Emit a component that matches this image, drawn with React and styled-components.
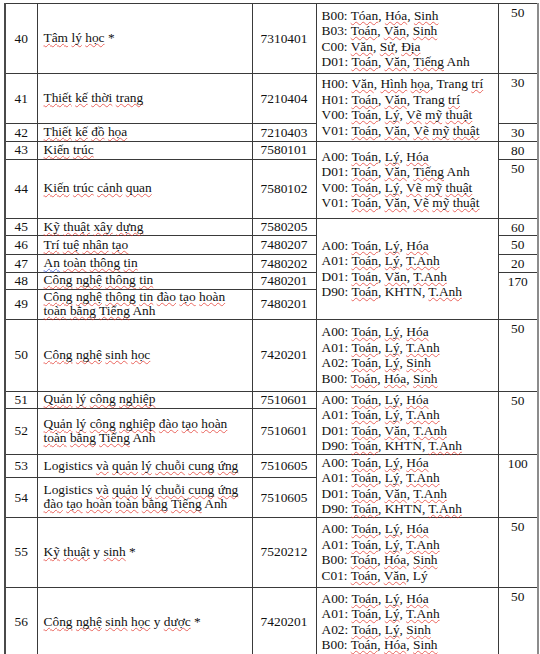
import { Fragment } from 'react';
import styled, { createGlobalStyle } from 'styled-components';

const Global = createGlobalStyle`
  html, body {
    margin: 0;
    padding: 0;
    background: #ffffff;
  }
  body {
    font-family: "Liberation Serif", "Times New Roman", serif;
    color: #111;
  }
`;

const Page = styled.div`
  width: 540px;
  height: 654px;
  padding: 3px 0 0 4px;
  box-sizing: border-box;
  overflow: hidden;
`;

const Sheet = styled.table`
  width: 533px;
  table-layout: fixed;
  border-collapse: collapse;
  font-size: 13.4px;
  line-height: 15.5px;
  border-top: 1px solid #3a3a3a;
  border-left: 2px solid #4a4a4a;
  border-right: 2px solid #8c8c8c;
  border-bottom: 2px solid #7a7a7a;
`;

const Row = styled.tr`
  height: ${(p) => p.$h}px;
`;

const Cell = styled.td`
  border: 1px solid #3a3a3a;
  padding: 0;
  vertical-align: middle;
  white-space: nowrap;
`;

const NoCell = styled(Cell)`
  text-align: center;
`;

const NameCell = styled(Cell)`
  padding: 0 8px 0 6px;
  line-height: 14.5px;
  white-space: normal;
`;

const CodeCell = styled(Cell)`
  text-align: center;
`;

const ComboCell = styled(Cell)`
  padding: 0 4px 0 5px;
`;

const QuotaCell = styled(Cell)`
  text-align: center;
  vertical-align: top;
  padding-top: 1px;
`;

const Flag = styled.span`
  text-decoration: underline wavy ${(p) => (p.$tone === 'blue' ? 'rgba(60, 90, 215, 0.8)' : 'rgba(226, 45, 35, 0.7)')};
  text-decoration-thickness: 1px;
  text-underline-offset: 1px;
  text-decoration-skip-ink: none;
`;

const Line = styled.div``;

// ~word = spelling squiggle, ^word = grammar squiggle
const Marked = ({ text }) =>
  text.split(' ').map((tok, i) => {
    const sep = i > 0 ? ' ' : '';
    const mark = tok[0] === '~' ? 'red' : tok[0] === '^' ? 'blue' : null;
    if (!mark) return <Fragment key={i}>{sep + tok}</Fragment>;
    const body = tok.slice(1);
    const comma = body.endsWith(',') ? ',' : '';
    const word = comma ? body.slice(0, -1) : body;
    return (
      <Fragment key={i}>
        {sep}
        <Flag $tone={mark}>{word}</Flag>
        {comma}
      </Fragment>
    );
  });

const TECH = ['A00: ~Toán, ~Lý, ~Hóa', 'A01: ~Toán, ~Lý, ~T.Anh', 'D01: ~Toán, ~Văn, ~T.Anh', 'D90: ~Toán, KHTN, ~T.Anh'];
const BIO = ['A00: ~Toán, ~Lý, ~Hóa', 'A01: ~Toán, ~Lý, ~T.Anh', 'A02: ~Toán, ~Lý, ~Sinh', 'B00: ~Toán, ~Hóa, ~Sinh'];

const rows = [
  {
    no: 40, h: 70, name: '~Tâm ~lý ~học *', code: '7310401', quota: '50',
    combo: ['B00: ~Tóan, ~Hóa, ~Sinh', 'B03: ~Toán, ~Văn, ~Sinh', 'C00: ~Văn, ~Sử, ~Địa', 'D01: ~Toán, ~Văn, ~Tiếng Anh'],
  },
  {
    no: 41, h: 50, name: '~Thiết ~kế ~thời ~trang', code: '7210404', quota: '30', span: 2,
    combo: ['H00: ~Văn, ~Hình ~họa, Trang ~trí', 'H01: ~Toán, ~Văn, Trang ~trí', 'V00: ~Toán, ~Lý, ~Vẽ ~mỹ ~thuật', 'V01: ~Toán, ~Văn, ~Vẽ ~mỹ ~thuật'],
  },
  { no: 42, h: 17, name: '~Thiết ~kế ~đồ ~họa', code: '7210403', quota: '30' },
  {
    no: 43, h: 18, name: '~Kiến ~trúc', code: '7580101', quota: '80', span: 2,
    combo: ['A00: ~Toán, ~Lý, ~Hóa', 'D01: ~Toán, ~Văn, ~Tiếng Anh', 'V00: ~Toán, ~Lý, ~Vẽ ~mỹ ~thuật', 'V01: ~Toán, ~Văn, ~Vẽ ~mỹ ~thuật'],
  },
  { no: 44, h: 59, name: '~Kiến ~trúc ~cảnh ~quan', code: '7580102', quota: '50' },
  { no: 45, h: 17, name: '~Kỹ ~thuật ~xây ~dựng', code: '7580205', quota: '60', span: 5, combo: TECH },
  { no: 46, h: 19, name: '~Trí ~tuệ ~nhân ~tạo', code: '7480207', quota: '50' },
  { no: 47, h: 17, name: '^An ~toàn ~thông ~tin', code: '7480202', quota: '20' },
  { no: 48, h: 17, name: '~Công ~nghệ ~thông ~tin', code: '7480201', quota: '170', quotaSpan: 2 },
  { no: 49, h: 30, name: '~Công ~nghệ ~thông ~tin ~đào ~tạo ~hoàn ~toàn ~bằng ~Tiếng Anh', code: '7480201', noQuota: true },
  { no: 50, h: 72, name: '~Công ~nghệ ~sinh ~học', code: '7420201', quota: '50', combo: BIO },
  { no: 51, h: 17, name: '~Quản ~lý ~công ~nghiệp', code: '7510601', quota: '50', quotaSpan: 2, span: 2, combo: TECH },
  { no: 52, h: 46, name: '~Quản ~lý ~công ~nghiệp ~đào ~tạo ~hoàn ~toàn ~bằng ~Tiếng Anh', code: '7510601', noQuota: true },
  { no: 53, h: 23, name: 'Logistics ~và ~quản ~lý ~chuỗi ~cung ~ứng', code: '7510605', quota: '100', quotaSpan: 2, span: 2, combo: TECH },
  { no: 54, h: 38, name: 'Logistics ~và ~quản ~lý ~chuỗi ~cung ~ứng ~đào ~tạo ~hoàn ~toàn ~bằng ~Tiếng Anh', code: '7510605', noQuota: true },
  {
    no: 55, h: 70, name: '~Kỹ ~thuật y ~sinh *', code: '7520212', quota: '50',
    combo: ['A00: ~Toán, ~Lý, ~Hóa', 'A01: ~Toán, ~Lý, ~T.Anh', 'B00: ~Toán, ~Hóa, ~Sinh', 'C01: ~Toán, ~Văn, Lý'],
  },
  { no: 56, h: 70, name: '~Công ~nghệ ~sinh ~học y ~dược *', code: '7420201', quota: '50', combo: BIO },
];

const App = () => (
  <Page>
    <Global />
    <Sheet>
      <colgroup>
        <col style={{ width: 32 }} />
        <col style={{ width: 215 }} />
        <col style={{ width: 64 }} />
        <col style={{ width: 182 }} />
        <col style={{ width: 40 }} />
      </colgroup>
      <tbody>
        {rows.map((r) => (
          <Row key={r.no} $h={r.h}>
            <NoCell>{r.no}</NoCell>
            <NameCell>
              <Marked text={r.name} />
            </NameCell>
            <CodeCell>{r.code}</CodeCell>
            {r.combo && (
              <ComboCell rowSpan={r.span || 1}>
                {r.combo.map((c) => (
                  <Line key={c}>
                    <Marked text={c} />
                  </Line>
                ))}
              </ComboCell>
            )}
            {!r.noQuota && <QuotaCell rowSpan={r.quotaSpan || 1}>{r.quota}</QuotaCell>}
          </Row>
        ))}
      </tbody>
    </Sheet>
  </Page>
);

export default App;
